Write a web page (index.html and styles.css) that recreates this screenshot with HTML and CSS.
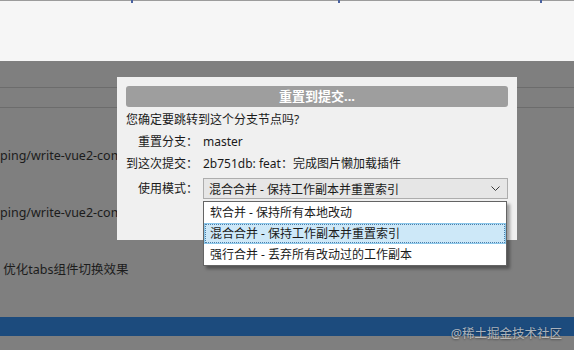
FILE: index.html
```html
<!DOCTYPE html>
<html lang="zh-CN">
<head>
  <meta charset="UTF-8">
  <title>重置到提交</title>
  <link rel="stylesheet" href="styles.css">
</head>
<body>
  <div class="window">
    <div class="toolbar">
      <span class="tick tick-1"></span>
      <span class="tick tick-2"></span>
      <span class="tick tick-3"></span>
    </div>
    <div class="content">
      <div class="header-row"></div>
      <div class="header-row short"></div>
      <div class="commit-list">
        <div class="commit branch">ping/write-vue2-com</div>
        <div class="commit branch">ping/write-vue2-com</div>
        <div class="commit">&nbsp;优化tabs组件切换效果</div>
      </div>
      <div class="statusbar"></div>
    </div>

    <div class="dialog">
      <div class="dialog-title">重置到提交...</div>
      <p class="question">您确定要跳转到这个分支节点吗?</p>
      <div class="form">
        <span class="label">重置分支：</span>
        <span class="value">master</span>
        <span class="label">到这次提交：</span>
        <span class="value">2b751db: feat：完成图片懒加载插件</span>
        <span class="label">使用模式：</span>
        <div class="select">
          <span>混合合并 - 保持工作副本并重置索引</span>
          <svg class="chevron" width="9" height="5" viewBox="0 0 9 5">
            <path d="M0.5 0.5 L4.5 4.5 L8.5 0.5" fill="none" stroke="#3a3a3a" stroke-width="1"/>
          </svg>
        </div>
      </div>
      <ul class="dropdown">
        <li>软合并 - 保持所有本地改动</li>
        <li class="active">混合合并 - 保持工作副本并重置索引</li>
        <li>强行合并 - 丢弃所有改动过的工作副本</li>
      </ul>
    </div>

    <div class="watermark">@稀土掘金技术社区</div>
  </div>
</body>
</html>
```

FILE: styles.css
```css
* {
  margin: 0;
  padding: 0;
  box-sizing: border-box;
}

body {
  font-family: 'Noto Sans', 'Noto Sans CJK SC', sans-serif;
  font-size: 12px;
  background-color: #7f7f7f;
  overflow: hidden;
}

.window {
  position: relative;
  width: 574px;
  height: 350px;
  overflow: hidden;
}

.toolbar {
  position: relative;
  height: 61px;
  background-color: #f6f6f6;
  border-top: 1px solid #9c9c9c;
}

.tick {
  position: absolute;
  top: -1px;
  width: 2px;
  height: 3px;
  background-color: #4a62a0;
}

.tick-1 { left: 131px; }
.tick-2 { left: 338px; }
.tick-3 { left: 540px; }

.content {
  background-color: #7f7f7f;
}

.header-row {
  height: 27px;
  border-bottom: 1px solid #6c6c6c;
}

.header-row.short {
  height: 20px;
}

.commit-list {
  padding-top: 19px;
}

.commit {
  height: 57px;
  line-height: 57px;
  font-size: 12.5px;
  color: #1c1c1c;
  white-space: nowrap;
}

.statusbar {
  margin-top: 19px;
  height: 19px;
  background-color: #1c4b7d;
}

/* dialog */
.dialog {
  position: absolute;
  left: 117px;
  top: 77px;
  width: 400px;
  height: 163px;
  padding: 9px;
  background-color: #f0f0f0;
  color: #1a1a1a;
}

.dialog-title {
  height: 21px;
  line-height: 21px;
  border-radius: 3px;
  background-color: #9e9e9e;
  color: #ffffff;
  font-size: 13px;
  font-weight: bold;
  text-align: center;
}

.question {
  margin-top: 5px;
  line-height: 16px;
}

.form {
  display: grid;
  grid-template-columns: 72px 1fr;
  column-gap: 5px;
  row-gap: 6px;
  align-items: center;
  margin-top: 6px;
}

.label {
  line-height: 16px;
  text-align: right;
  white-space: nowrap;
}

.value {
  line-height: 16px;
  white-space: nowrap;
}

.select {
  display: flex;
  align-items: center;
  justify-content: space-between;
  height: 21px;
  padding: 0 7px 0 5px;
  border: 1px solid #adadad;
  background-color: #e6e6e6;
}

.chevron {
  display: block;
}

.dropdown {
  position: absolute;
  left: 86px;
  top: 124px;
  width: 304px;
  list-style: none;
  border: 1px solid #646464;
  background-color: #ffffff;
  box-shadow: 3px 3px 3px rgba(0, 0, 0, 0.35);
}

.dropdown li {
  height: 21px;
  line-height: 19px;
  padding-left: 5px;
  border: 1px solid transparent;
  white-space: nowrap;
}

.dropdown li.active {
  background-color: #cde8f8;
  border-color: #8cc8ec;
  outline: 1px dotted #4d7fa8;
  outline-offset: -2px;
}

.watermark {
  position: absolute;
  right: 12px;
  top: 323px;
  font-size: 12.5px;
  color: rgba(210, 210, 210, 0.8);
  text-shadow: 0 1px 2px rgba(0, 0, 0, 0.4);
}
```
